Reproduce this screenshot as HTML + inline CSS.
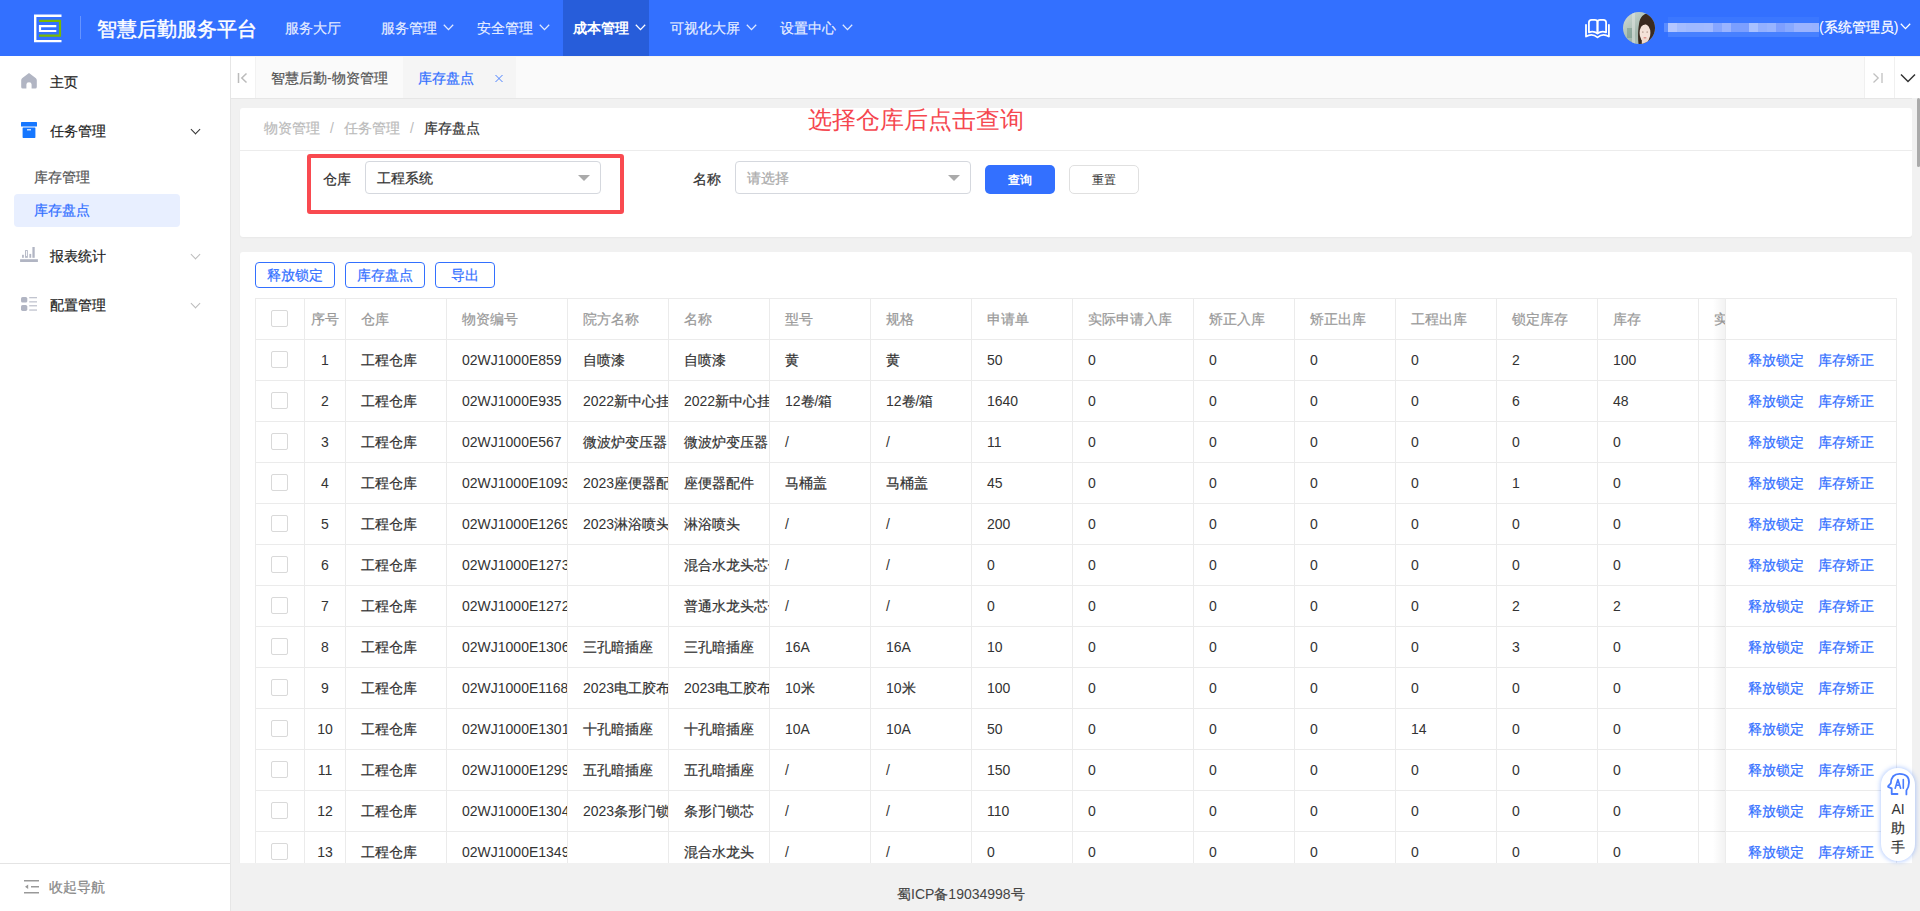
<!DOCTYPE html>
<html><head><meta charset="utf-8"><style>
*{margin:0;padding:0;box-sizing:border-box}
html,body{width:1920px;height:911px;overflow:hidden;background:#f1f1f1;font-family:"Liberation Sans",sans-serif;font-size:14px;color:#333}
.abs{position:absolute}
#hdr{position:absolute;left:0;top:0;width:1920px;height:56px;background:#3370ff}
#hdr .sep{position:absolute;left:80px;top:16px;width:1px;height:23px;background:rgba(255,255,255,.25)}
#hdr .title{position:absolute;left:97px;top:15px;font-size:20px;line-height:28px;color:#fff;font-weight:500;white-space:nowrap}
.nav{position:absolute;top:0;height:56px;line-height:56px;font-size:14px;color:rgba(255,255,255,.85);white-space:nowrap}
.nav.on{background:#275dda;color:#fff;font-weight:bold}
.chev{display:inline-block;width:11px;height:7px;vertical-align:top;margin-left:6px;margin-top:24px;background:no-repeat}
#side{position:absolute;left:0;top:56px;width:231px;height:855px;background:#fff;border-right:1px solid #e6e6e6}
.mi{position:absolute;left:50px;font-size:14px;line-height:20px;color:#1f1f1f;font-weight:500;white-space:nowrap}
.smi{position:absolute;left:34px;font-size:14px;line-height:20px;color:#555;white-space:nowrap}
.schev{position:absolute;left:192px;width:7px;height:7px;border-right:1.2px solid #999;border-bottom:1.2px solid #999;transform:rotate(45deg)}
#tabs{position:absolute;left:231px;top:56px;width:1689px;height:43px;background:#fafafa;border-top:1px solid #f6f4f0;border-bottom:1px solid #e6e6e6}
.card{position:absolute;background:#fff;border-radius:3px;box-shadow:0 1px 2px rgba(0,0,0,.04)}
.tbl .hl{position:absolute;left:255px;width:1641px;height:1px;background:#ebebeb}
.tbl .vl{position:absolute;top:298px;width:1px;height:574px;background:#ebebeb}
.th,.td{position:absolute;height:41px;line-height:43px;padding-left:15px;white-space:nowrap;overflow:hidden;font-size:14px}
.th{color:#999}
.td{color:#333}
.th.c,.td.c{padding-left:0;text-align:center}
.cb{position:absolute;width:17px;height:17px;border:1px solid #d9d9d9;border-radius:2px;background:#fff}
.fixcol{position:absolute;left:1725px;width:172px;background:#fff;border-left:1px solid #ececec;border-right:1px solid #ebebeb}
.fshadow{position:absolute;left:1713px;width:12px;background:linear-gradient(90deg,rgba(0,0,0,0),rgba(0,0,0,.05))}
.fhl{position:absolute;left:0;width:170px;height:1px;background:#ebebeb}
.act{position:absolute;left:0;width:170px;height:41px;line-height:42px;font-size:14px;color:#3370ff;white-space:nowrap;padding-left:22px}
.act span+span{margin-left:14px}
#clip{position:absolute;left:231px;top:98px;width:1689px;height:765px;overflow:hidden}
#wrap{position:absolute;left:0;top:0;width:1920px;height:863px;overflow:hidden}
.bc{font-size:14px;line-height:20px;white-space:nowrap}
.bc .sl{color:#bbb;margin:0 10px}
.lbl{font-size:14px;line-height:20px;color:#333;white-space:nowrap}
.sel{height:33px;border:1px solid #d5d8de;border-radius:4px;background:#fff;font-size:14px;line-height:33px;padding-left:11px;white-space:nowrap}
.tri{position:absolute;right:10px;top:13px;width:0;height:0;border-left:6px solid transparent;border-right:6px solid transparent;border-top:6px solid #aaa}
.btn-p{width:70px;height:29px;border-radius:5px;background:#3370ff;color:#fff;font-size:12px;line-height:31px;text-align:center;font-weight:bold}
.btn-d{width:70px;height:29px;border-radius:5px;border:1px solid #e0e0e0;background:#fff;color:#333;font-size:12px;line-height:29px;text-align:center}
.btn-o{height:26px;border-radius:4px;border:1px solid #3370ff;background:#fff;color:#3370ff;font-size:14px;line-height:24px;text-align:center}
.ai{background:#fff;border-radius:17px;box-shadow:0 0 4px 1px rgba(61,123,255,.35)}

b.z{font-weight:inherit;-webkit-text-stroke-width:.22px}
.ns b.z,.nav.on b.z,.btn-p b.z,.btn-d b.z{-webkit-text-stroke-width:0}

#hdr .title b.z{-webkit-text-stroke-width:.45px}

</style></head><body>
<div id="hdr">
  <svg class="abs" style="left:33px;top:14px" width="30" height="29" viewBox="0 0 30 29">
    <path d="M28.5 1.7H2.2V27.1H28.5" fill="none" stroke="#fff" stroke-width="2.4"/>
    <path d="M6 6.8H27V21.6H6" fill="none" stroke="#7ab800" stroke-width="2.2"/>
    <path d="M23.3 12.2H7V17H23.3" fill="none" stroke="#fff" stroke-width="2.2"/>
  </svg>
  <div class="sep"></div>
  <div class="title"><b class="z">智慧后勤服务平台</b></div>
  <div class="nav" style="left:285px"><b class="z">服务大厅</b></div>
  <div class="nav" style="left:381px"><b class="z">服务管理</b><svg class="chev" viewBox="0 0 11 7"><path d="M0.8 0.8L5.5 5.6L10.2 0.8" fill="none" stroke="currentColor" stroke-width="1.3"/></svg></div>
  <div class="nav" style="left:477px"><b class="z">安全管理</b><svg class="chev" viewBox="0 0 11 7"><path d="M0.8 0.8L5.5 5.6L10.2 0.8" fill="none" stroke="currentColor" stroke-width="1.3"/></svg></div>
  <div class="nav on" style="left:563px;padding-left:10px;width:86px"><b class="z">成本管理</b><svg class="chev" viewBox="0 0 11 7"><path d="M0.8 0.8L5.5 5.6L10.2 0.8" fill="none" stroke="currentColor" stroke-width="1.3"/></svg></div>
  <div class="nav" style="left:670px"><b class="z">可视化大屏</b><svg class="chev" viewBox="0 0 11 7"><path d="M0.8 0.8L5.5 5.6L10.2 0.8" fill="none" stroke="currentColor" stroke-width="1.3"/></svg></div>
  <div class="nav" style="left:780px"><b class="z">设置中心</b><svg class="chev" viewBox="0 0 11 7"><path d="M0.8 0.8L5.5 5.6L10.2 0.8" fill="none" stroke="currentColor" stroke-width="1.3"/></svg></div>
  <svg class="abs" style="left:1584px;top:18px" width="28" height="23" viewBox="0 0 28 23"><g fill="none" stroke="#fff" stroke-width="1.8" stroke-linejoin="round" stroke-linecap="round"><path d="M13.5 15.4V4.2Q13.5 1.9 10.8 1.9H7.6Q4.9 1.9 4.9 4.6V14.3Q9.6 12.6 13.5 15.4Z"/><path d="M13.5 15.4V4.2Q13.5 1.9 16.2 1.9H19.4Q22.1 1.9 22.1 4.6V14.3Q17.4 12.6 13.5 15.4Z"/><path d="M2 6.8V18.6Q8 14.8 13.5 19.4Q19 14.8 24.9 18.6V6.8"/></g></svg>
  <svg class="abs" style="left:1623px;top:12px" width="32" height="32" viewBox="0 0 32 32">
    <defs><clipPath id="av"><circle cx="16" cy="16" r="16"/></clipPath>
    <linearGradient id="avbg" x1="0" y1="0" x2="1" y2="1"><stop offset="0" stop-color="#d3dcd7"/><stop offset=".55" stop-color="#a3b8ae"/><stop offset="1" stop-color="#bfcbc4"/></linearGradient></defs>
    <g clip-path="url(#av)">
      <rect width="32" height="32" fill="url(#avbg)"/>
      <rect x="9" y="0" width="3" height="32" fill="#e3e8e4" opacity=".5"/>
      <rect x="4" y="16" width="5" height="10" fill="#6f9486" opacity=".5"/>
      <path d="M15.5 32C14.8 26 15 18 16 12C17 4 21.5 1 26 1.5C30.5 2.5 32.5 7 32.5 14V32Z" fill="#3a2a20"/>
      <ellipse cx="22" cy="21" rx="5.4" ry="8.8" fill="#f4e2d8"/>
      <path d="M17.5 14Q20 9.5 25 10.5Q23 12 17.5 14Z" fill="#3a2a20"/>
      <rect x="18.8" y="26" width="6.5" height="6" fill="#f0d9cd"/>
      <ellipse cx="19.8" cy="20" rx=".9" ry=".6" fill="#7a5a4c" opacity=".7"/><ellipse cx="24.2" cy="20" rx=".9" ry=".6" fill="#7a5a4c" opacity=".7"/>
      <ellipse cx="22" cy="25.8" rx="1.6" ry=".8" fill="#de8f88"/>
    </g>
  </svg>
  <div class="abs" style="left:1668px;top:17px;width:151px;height:6px;background:#3b77ff"></div>
  <div class="abs" style="left:1668px;top:32px;width:151px;height:5px;background:#4780ff"></div>
  <div class="abs" style="left:1664px;top:23px;width:4px;height:9px;background:#5a8cff"></div>
  <div class="abs" style="left:1668px;top:23px;width:151px;height:9px;background:linear-gradient(90deg,#b3c6ff 0px 9px,#a3bcff 9px 18px,#9fb9ff 18px 27px,#a0b9ff 27px 36px,#a2baff 36px 45px,#86a6ff 45px 54px,#9ab4ff 54px 63px,#7a9fff 63px 72px,#7c9fff 72px 81px,#a9c1ff 81px 90px,#93b0ff 90px 99px,#98b4ff 99px 108px,#7e9fff 108px 117px,#88a9ff 117px 126px,#9ab3ff 126px 135px,#9ab3ff 135px 144px,#98b2ff 144px 151px)"></div>
  <div class="abs" style="left:1819px;top:16px;font-size:14px;line-height:22px;color:#fff;white-space:nowrap">(<b class="z">系统管理员</b>)<svg class="chev" style="margin-left:2px;margin-top:7px" viewBox="0 0 11 7"><path d="M0.8 0.8L5.5 5.6L10.2 0.8" fill="none" stroke="currentColor" stroke-width="1.3"/></svg></div>
</div>

<div id="side">
  <svg class="abs" style="left:20px;top:16px" width="18" height="18" viewBox="0 0 18 18"><path d="M9 1.1L15.6 5.9Q16.8 6.8 16.8 8.2V15Q16.8 16.6 15.2 16.6H11.6V12.4Q11.6 10.2 9 10.2Q6.4 10.2 6.4 12.4V16.6H2.8Q1.2 16.6 1.2 15V8.2Q1.2 6.8 2.4 5.9Z" fill="#b1b5c3"/></svg>
  <div class="mi" style="top:16px"><b class="z">主页</b></div>
  <svg class="abs" style="left:20px;top:65px" width="18" height="18" viewBox="0 0 18 18"><rect x="1" y="1" width="16" height="4.6" rx=".6" fill="#1677ff"/><rect x="2.6" y="6.5" width="12.8" height="10.4" rx=".6" fill="#1677ff"/><rect x="7" y="8" width="4" height="1.5" fill="#fff" opacity=".75"/></svg>
  <div class="mi" style="top:65px"><b class="z">任务管理</b></div>
  <div class="schev" style="top:70px;border-color:#333"></div>
  <div class="smi" style="top:111px"><b class="z">库存管理</b></div>
  <div class="abs" style="left:14px;top:138px;width:166px;height:33px;border-radius:4px;background:#e8efff"></div>
  <div class="smi" style="top:144px;color:#3370ff"><b class="z">库存盘点</b></div>
  <svg class="abs" style="left:20px;top:191px" width="18" height="16" viewBox="0 0 18 16"><g fill="#b1b5c3"><rect x="0.1" y="12.2" width="17.8" height="2.8"/><rect x="2.1" y="7.8" width="1.7" height="3"/><rect x="5.55" y="3.55" width="1.8" height="6.8" fill="none" stroke="#b1b5c3" stroke-width=".9"/><rect x="9.4" y="6.9" width="1.8" height="3.9"/><rect x="12.4" y="0" width="2.3" height="10.8"/></g></svg>
  <div class="mi" style="top:190px"><b class="z">报表统计</b></div>
  <div class="schev" style="top:195px;border-color:#bbb"></div>
  <svg class="abs" style="left:21px;top:241px" width="17" height="15" viewBox="0 0 17 15"><g fill="#b1b5c3"><rect x="0" y="0" width="6.3" height="5.6" rx="1.6"/><rect x="0" y="8" width="6.3" height="5.9" rx="1.6"/><rect x="8.2" y="0" width="7.8" height="1.3" opacity=".8"/><rect x="8.2" y="4.2" width="7.8" height="1.3" opacity=".8"/><rect x="8.2" y="8.1" width="7.8" height="1.3" opacity=".8"/><rect x="8.2" y="12.4" width="7.8" height="1.3" opacity=".8"/></g></svg>
  <div class="mi" style="top:239px"><b class="z">配置管理</b></div>
  <div class="schev" style="top:244px;border-color:#bbb"></div>
  <div class="abs" style="left:0;top:807px;width:230px;height:1px;background:#e4e4e4"></div>
  <svg class="abs" style="left:24px;top:824px" width="16" height="14" viewBox="0 0 16 14"><g fill="#999"><rect x="0" y="0" width="15" height="1.5"/><rect x="7" y="6" width="8" height="1.5"/><rect x="0" y="12" width="15" height="1.5"/><path d="M1 6.75L4.2 4.6V8.9Z"/></g></svg>
  <div class="abs" style="left:49px;top:821px;font-size:14px;line-height:20px;color:#888;white-space:nowrap"><b class="z">收起导航</b></div>
</div>

<div id="tabs">
  <div class="abs" style="left:0;top:0;width:25px;height:41px;background:#fff;border-right:1px solid #f2f2f2"></div>
  <svg class="abs" style="left:6px;top:15px" width="11" height="12" viewBox="0 0 11 12"><path d="M1.5 1V11M9.5 1.5L4.8 6L9.5 10.5" fill="none" stroke="#bbb" stroke-width="1.5"/></svg>
  <div class="abs" style="left:40px;top:11px;font-size:14px;line-height:20px;color:#555;white-space:nowrap"><b class="z">智慧后勤</b>-<b class="z">物资管理</b></div>
  <div class="abs" style="left:172px;top:0;width:113px;height:41px;background:#f5f5f5"></div>
  <div class="abs" style="left:187px;top:11px;font-size:14px;line-height:20px;color:#3370ff;white-space:nowrap"><b class="z">库存盘点</b></div>
  <svg class="abs" style="left:264px;top:17px" width="8" height="9" viewBox="0 0 8 9"><path d="M0.5 1L7.5 8M7.5 1L0.5 8" stroke="#4d82ff" stroke-width="1"/></svg>
  <div class="abs" style="left:1633px;top:0;width:56px;height:41px;background:#fff"></div>
  <div class="abs" style="left:1633px;top:0;width:1px;height:41px;background:#f0f0f0"></div>
  <div class="abs" style="left:1663px;top:0;width:1px;height:41px;background:#f0f0f0"></div>
  <svg class="abs" style="left:1641px;top:15px" width="12" height="12" viewBox="0 0 12 12"><path d="M1.5 1.5L6.2 6L1.5 10.5M10 1V11" fill="none" stroke="#c0c0c0" stroke-width="1.3"/></svg>
  <svg class="abs" style="left:1669px;top:16px" width="16" height="10" viewBox="0 0 16 10"><path d="M1 1.5L8 8.5L15 1.5" fill="none" stroke="#333" stroke-width="1.5"/></svg>
</div>

<div id="wrap">
<div class="card" style="left:240px;top:108px;width:1672px;height:129px"></div>
<div class="abs" style="left:240px;top:150px;width:1672px;height:1px;background:#ececec"></div>
<div class="abs bc" style="left:264px;top:118px"><span style="color:#bbb"><b class="z">物资管理</b></span><span class="sl">/</span><span style="color:#bbb"><b class="z">任务管理</b></span><span class="sl">/</span><span style="color:#333"><b class="z">库存盘点</b></span></div>
<div class="abs ns" style="left:808px;top:104px;font-size:24px;line-height:32px;color:#f5474f;white-space:nowrap"><b class="z">选择仓库后点击查询</b></div>
<div class="abs" style="left:307px;top:154px;width:317px;height:60px;border:4px solid #f94a50;border-radius:3px"></div>
<div class="abs lbl" style="left:323px;top:169px"><b class="z">仓库</b></div>
<div class="abs sel" style="left:365px;top:161px;width:236px"><span style="color:#333"><b class="z">工程系统</b></span><i class="tri"></i></div>
<div class="abs lbl" style="left:693px;top:169px"><b class="z">名称</b></div>
<div class="abs sel" style="left:735px;top:161px;width:236px"><span style="color:#aaa"><b class="z">请选择</b></span><i class="tri"></i></div>
<div class="abs btn-p" style="left:985px;top:165px"><b class="z">查询</b></div>
<div class="abs btn-d" style="left:1069px;top:165px"><b class="z">重置</b></div>

<div class="card" style="left:240px;top:252px;width:1672px;height:640px"></div>
<div class="abs btn-o" style="left:255px;top:262px;width:80px"><b class="z">释放锁定</b></div>
<div class="abs btn-o" style="left:345px;top:262px;width:80px"><b class="z">库存盘点</b></div>
<div class="abs btn-o" style="left:435px;top:262px;width:60px"><b class="z">导出</b></div>
<div class="tbl">
<div class="hl" style="top:298px"></div>
<div class="hl" style="top:339px"></div>
<div class="hl" style="top:380px"></div>
<div class="hl" style="top:421px"></div>
<div class="hl" style="top:462px"></div>
<div class="hl" style="top:503px"></div>
<div class="hl" style="top:544px"></div>
<div class="hl" style="top:585px"></div>
<div class="hl" style="top:626px"></div>
<div class="hl" style="top:667px"></div>
<div class="hl" style="top:708px"></div>
<div class="hl" style="top:749px"></div>
<div class="hl" style="top:790px"></div>
<div class="hl" style="top:831px"></div>
<div class="hl" style="top:872px"></div>
<div class="vl" style="left:255px"></div>
<div class="vl" style="left:304px"></div>
<div class="vl" style="left:345px"></div>
<div class="vl" style="left:446px"></div>
<div class="vl" style="left:567px"></div>
<div class="vl" style="left:668px"></div>
<div class="vl" style="left:769px"></div>
<div class="vl" style="left:870px"></div>
<div class="vl" style="left:971px"></div>
<div class="vl" style="left:1072px"></div>
<div class="vl" style="left:1193px"></div>
<div class="vl" style="left:1294px"></div>
<div class="vl" style="left:1395px"></div>
<div class="vl" style="left:1496px"></div>
<div class="vl" style="left:1597px"></div>
<div class="vl" style="left:1698px"></div>
<div class="cb" style="left:271px;top:310px"></div>
<div class="th c" style="left:305px;top:298px;width:40px"><b class="z">序号</b></div>
<div class="th" style="left:346px;top:298px;width:100px"><b class="z">仓库</b></div>
<div class="th" style="left:447px;top:298px;width:120px"><b class="z">物资编号</b></div>
<div class="th" style="left:568px;top:298px;width:100px"><b class="z">院方名称</b></div>
<div class="th" style="left:669px;top:298px;width:100px"><b class="z">名称</b></div>
<div class="th" style="left:770px;top:298px;width:100px"><b class="z">型号</b></div>
<div class="th" style="left:871px;top:298px;width:100px"><b class="z">规格</b></div>
<div class="th" style="left:972px;top:298px;width:100px"><b class="z">申请单</b></div>
<div class="th" style="left:1073px;top:298px;width:120px"><b class="z">实际申请入库</b></div>
<div class="th" style="left:1194px;top:298px;width:100px"><b class="z">矫正入库</b></div>
<div class="th" style="left:1295px;top:298px;width:100px"><b class="z">矫正出库</b></div>
<div class="th" style="left:1396px;top:298px;width:100px"><b class="z">工程出库</b></div>
<div class="th" style="left:1497px;top:298px;width:100px"><b class="z">锁定库存</b></div>
<div class="th" style="left:1598px;top:298px;width:100px"><b class="z">库存</b></div>
<div class="th" style="left:1699px;top:298px;width:121px"><b class="z">实际库存</b></div>
<div class="cb" style="left:271px;top:351px"></div>
<div class="td c" style="left:305px;top:339px;width:40px">1</div>
<div class="td" style="left:346px;top:339px;width:100px"><b class="z">工程仓库</b></div>
<div class="td" style="left:447px;top:339px;width:120px">02WJ1000E859</div>
<div class="td" style="left:568px;top:339px;width:100px"><b class="z">自喷漆</b></div>
<div class="td" style="left:669px;top:339px;width:100px"><b class="z">自喷漆</b></div>
<div class="td" style="left:770px;top:339px;width:100px"><b class="z">黄</b></div>
<div class="td" style="left:871px;top:339px;width:100px"><b class="z">黄</b></div>
<div class="td" style="left:972px;top:339px;width:100px">50</div>
<div class="td" style="left:1073px;top:339px;width:120px">0</div>
<div class="td" style="left:1194px;top:339px;width:100px">0</div>
<div class="td" style="left:1295px;top:339px;width:100px">0</div>
<div class="td" style="left:1396px;top:339px;width:100px">0</div>
<div class="td" style="left:1497px;top:339px;width:100px">2</div>
<div class="td" style="left:1598px;top:339px;width:100px">100</div>
<div class="cb" style="left:271px;top:392px"></div>
<div class="td c" style="left:305px;top:380px;width:40px">2</div>
<div class="td" style="left:346px;top:380px;width:100px"><b class="z">工程仓库</b></div>
<div class="td" style="left:447px;top:380px;width:120px">02WJ1000E935</div>
<div class="td" style="left:568px;top:380px;width:100px">2022<b class="z">新中心挂号</b></div>
<div class="td" style="left:669px;top:380px;width:100px">2022<b class="z">新中心挂号</b></div>
<div class="td" style="left:770px;top:380px;width:100px">12<b class="z">卷</b>/<b class="z">箱</b></div>
<div class="td" style="left:871px;top:380px;width:100px">12<b class="z">卷</b>/<b class="z">箱</b></div>
<div class="td" style="left:972px;top:380px;width:100px">1640</div>
<div class="td" style="left:1073px;top:380px;width:120px">0</div>
<div class="td" style="left:1194px;top:380px;width:100px">0</div>
<div class="td" style="left:1295px;top:380px;width:100px">0</div>
<div class="td" style="left:1396px;top:380px;width:100px">0</div>
<div class="td" style="left:1497px;top:380px;width:100px">6</div>
<div class="td" style="left:1598px;top:380px;width:100px">48</div>
<div class="cb" style="left:271px;top:433px"></div>
<div class="td c" style="left:305px;top:421px;width:40px">3</div>
<div class="td" style="left:346px;top:421px;width:100px"><b class="z">工程仓库</b></div>
<div class="td" style="left:447px;top:421px;width:120px">02WJ1000E567</div>
<div class="td" style="left:568px;top:421px;width:100px"><b class="z">微波炉变压器</b></div>
<div class="td" style="left:669px;top:421px;width:100px"><b class="z">微波炉变压器</b></div>
<div class="td" style="left:770px;top:421px;width:100px">/</div>
<div class="td" style="left:871px;top:421px;width:100px">/</div>
<div class="td" style="left:972px;top:421px;width:100px">11</div>
<div class="td" style="left:1073px;top:421px;width:120px">0</div>
<div class="td" style="left:1194px;top:421px;width:100px">0</div>
<div class="td" style="left:1295px;top:421px;width:100px">0</div>
<div class="td" style="left:1396px;top:421px;width:100px">0</div>
<div class="td" style="left:1497px;top:421px;width:100px">0</div>
<div class="td" style="left:1598px;top:421px;width:100px">0</div>
<div class="cb" style="left:271px;top:474px"></div>
<div class="td c" style="left:305px;top:462px;width:40px">4</div>
<div class="td" style="left:346px;top:462px;width:100px"><b class="z">工程仓库</b></div>
<div class="td" style="left:447px;top:462px;width:120px">02WJ1000E1093</div>
<div class="td" style="left:568px;top:462px;width:100px">2023<b class="z">座便器配件</b></div>
<div class="td" style="left:669px;top:462px;width:100px"><b class="z">座便器配件</b></div>
<div class="td" style="left:770px;top:462px;width:100px"><b class="z">马桶盖</b></div>
<div class="td" style="left:871px;top:462px;width:100px"><b class="z">马桶盖</b></div>
<div class="td" style="left:972px;top:462px;width:100px">45</div>
<div class="td" style="left:1073px;top:462px;width:120px">0</div>
<div class="td" style="left:1194px;top:462px;width:100px">0</div>
<div class="td" style="left:1295px;top:462px;width:100px">0</div>
<div class="td" style="left:1396px;top:462px;width:100px">0</div>
<div class="td" style="left:1497px;top:462px;width:100px">1</div>
<div class="td" style="left:1598px;top:462px;width:100px">0</div>
<div class="cb" style="left:271px;top:515px"></div>
<div class="td c" style="left:305px;top:503px;width:40px">5</div>
<div class="td" style="left:346px;top:503px;width:100px"><b class="z">工程仓库</b></div>
<div class="td" style="left:447px;top:503px;width:120px">02WJ1000E1269</div>
<div class="td" style="left:568px;top:503px;width:100px">2023<b class="z">淋浴喷头</b></div>
<div class="td" style="left:669px;top:503px;width:100px"><b class="z">淋浴喷头</b></div>
<div class="td" style="left:770px;top:503px;width:100px">/</div>
<div class="td" style="left:871px;top:503px;width:100px">/</div>
<div class="td" style="left:972px;top:503px;width:100px">200</div>
<div class="td" style="left:1073px;top:503px;width:120px">0</div>
<div class="td" style="left:1194px;top:503px;width:100px">0</div>
<div class="td" style="left:1295px;top:503px;width:100px">0</div>
<div class="td" style="left:1396px;top:503px;width:100px">0</div>
<div class="td" style="left:1497px;top:503px;width:100px">0</div>
<div class="td" style="left:1598px;top:503px;width:100px">0</div>
<div class="cb" style="left:271px;top:556px"></div>
<div class="td c" style="left:305px;top:544px;width:40px">6</div>
<div class="td" style="left:346px;top:544px;width:100px"><b class="z">工程仓库</b></div>
<div class="td" style="left:447px;top:544px;width:120px">02WJ1000E1273</div>
<div class="td" style="left:568px;top:544px;width:100px"></div>
<div class="td" style="left:669px;top:544px;width:100px"><b class="z">混合水龙头芯子</b></div>
<div class="td" style="left:770px;top:544px;width:100px">/</div>
<div class="td" style="left:871px;top:544px;width:100px">/</div>
<div class="td" style="left:972px;top:544px;width:100px">0</div>
<div class="td" style="left:1073px;top:544px;width:120px">0</div>
<div class="td" style="left:1194px;top:544px;width:100px">0</div>
<div class="td" style="left:1295px;top:544px;width:100px">0</div>
<div class="td" style="left:1396px;top:544px;width:100px">0</div>
<div class="td" style="left:1497px;top:544px;width:100px">0</div>
<div class="td" style="left:1598px;top:544px;width:100px">0</div>
<div class="cb" style="left:271px;top:597px"></div>
<div class="td c" style="left:305px;top:585px;width:40px">7</div>
<div class="td" style="left:346px;top:585px;width:100px"><b class="z">工程仓库</b></div>
<div class="td" style="left:447px;top:585px;width:120px">02WJ1000E1272</div>
<div class="td" style="left:568px;top:585px;width:100px"></div>
<div class="td" style="left:669px;top:585px;width:100px"><b class="z">普通水龙头芯子</b></div>
<div class="td" style="left:770px;top:585px;width:100px">/</div>
<div class="td" style="left:871px;top:585px;width:100px">/</div>
<div class="td" style="left:972px;top:585px;width:100px">0</div>
<div class="td" style="left:1073px;top:585px;width:120px">0</div>
<div class="td" style="left:1194px;top:585px;width:100px">0</div>
<div class="td" style="left:1295px;top:585px;width:100px">0</div>
<div class="td" style="left:1396px;top:585px;width:100px">0</div>
<div class="td" style="left:1497px;top:585px;width:100px">2</div>
<div class="td" style="left:1598px;top:585px;width:100px">2</div>
<div class="cb" style="left:271px;top:638px"></div>
<div class="td c" style="left:305px;top:626px;width:40px">8</div>
<div class="td" style="left:346px;top:626px;width:100px"><b class="z">工程仓库</b></div>
<div class="td" style="left:447px;top:626px;width:120px">02WJ1000E1306</div>
<div class="td" style="left:568px;top:626px;width:100px"><b class="z">三孔暗插座</b></div>
<div class="td" style="left:669px;top:626px;width:100px"><b class="z">三孔暗插座</b></div>
<div class="td" style="left:770px;top:626px;width:100px">16A</div>
<div class="td" style="left:871px;top:626px;width:100px">16A</div>
<div class="td" style="left:972px;top:626px;width:100px">10</div>
<div class="td" style="left:1073px;top:626px;width:120px">0</div>
<div class="td" style="left:1194px;top:626px;width:100px">0</div>
<div class="td" style="left:1295px;top:626px;width:100px">0</div>
<div class="td" style="left:1396px;top:626px;width:100px">0</div>
<div class="td" style="left:1497px;top:626px;width:100px">3</div>
<div class="td" style="left:1598px;top:626px;width:100px">0</div>
<div class="cb" style="left:271px;top:679px"></div>
<div class="td c" style="left:305px;top:667px;width:40px">9</div>
<div class="td" style="left:346px;top:667px;width:100px"><b class="z">工程仓库</b></div>
<div class="td" style="left:447px;top:667px;width:120px">02WJ1000E1168</div>
<div class="td" style="left:568px;top:667px;width:100px">2023<b class="z">电工胶布</b></div>
<div class="td" style="left:669px;top:667px;width:100px">2023<b class="z">电工胶布</b></div>
<div class="td" style="left:770px;top:667px;width:100px">10<b class="z">米</b></div>
<div class="td" style="left:871px;top:667px;width:100px">10<b class="z">米</b></div>
<div class="td" style="left:972px;top:667px;width:100px">100</div>
<div class="td" style="left:1073px;top:667px;width:120px">0</div>
<div class="td" style="left:1194px;top:667px;width:100px">0</div>
<div class="td" style="left:1295px;top:667px;width:100px">0</div>
<div class="td" style="left:1396px;top:667px;width:100px">0</div>
<div class="td" style="left:1497px;top:667px;width:100px">0</div>
<div class="td" style="left:1598px;top:667px;width:100px">0</div>
<div class="cb" style="left:271px;top:720px"></div>
<div class="td c" style="left:305px;top:708px;width:40px">10</div>
<div class="td" style="left:346px;top:708px;width:100px"><b class="z">工程仓库</b></div>
<div class="td" style="left:447px;top:708px;width:120px">02WJ1000E1301</div>
<div class="td" style="left:568px;top:708px;width:100px"><b class="z">十孔暗插座</b></div>
<div class="td" style="left:669px;top:708px;width:100px"><b class="z">十孔暗插座</b></div>
<div class="td" style="left:770px;top:708px;width:100px">10A</div>
<div class="td" style="left:871px;top:708px;width:100px">10A</div>
<div class="td" style="left:972px;top:708px;width:100px">50</div>
<div class="td" style="left:1073px;top:708px;width:120px">0</div>
<div class="td" style="left:1194px;top:708px;width:100px">0</div>
<div class="td" style="left:1295px;top:708px;width:100px">0</div>
<div class="td" style="left:1396px;top:708px;width:100px">14</div>
<div class="td" style="left:1497px;top:708px;width:100px">0</div>
<div class="td" style="left:1598px;top:708px;width:100px">0</div>
<div class="cb" style="left:271px;top:761px"></div>
<div class="td c" style="left:305px;top:749px;width:40px">11</div>
<div class="td" style="left:346px;top:749px;width:100px"><b class="z">工程仓库</b></div>
<div class="td" style="left:447px;top:749px;width:120px">02WJ1000E1299</div>
<div class="td" style="left:568px;top:749px;width:100px"><b class="z">五孔暗插座</b></div>
<div class="td" style="left:669px;top:749px;width:100px"><b class="z">五孔暗插座</b></div>
<div class="td" style="left:770px;top:749px;width:100px">/</div>
<div class="td" style="left:871px;top:749px;width:100px">/</div>
<div class="td" style="left:972px;top:749px;width:100px">150</div>
<div class="td" style="left:1073px;top:749px;width:120px">0</div>
<div class="td" style="left:1194px;top:749px;width:100px">0</div>
<div class="td" style="left:1295px;top:749px;width:100px">0</div>
<div class="td" style="left:1396px;top:749px;width:100px">0</div>
<div class="td" style="left:1497px;top:749px;width:100px">0</div>
<div class="td" style="left:1598px;top:749px;width:100px">0</div>
<div class="cb" style="left:271px;top:802px"></div>
<div class="td c" style="left:305px;top:790px;width:40px">12</div>
<div class="td" style="left:346px;top:790px;width:100px"><b class="z">工程仓库</b></div>
<div class="td" style="left:447px;top:790px;width:120px">02WJ1000E1304</div>
<div class="td" style="left:568px;top:790px;width:100px">2023<b class="z">条形门锁芯</b></div>
<div class="td" style="left:669px;top:790px;width:100px"><b class="z">条形门锁芯</b></div>
<div class="td" style="left:770px;top:790px;width:100px">/</div>
<div class="td" style="left:871px;top:790px;width:100px">/</div>
<div class="td" style="left:972px;top:790px;width:100px">110</div>
<div class="td" style="left:1073px;top:790px;width:120px">0</div>
<div class="td" style="left:1194px;top:790px;width:100px">0</div>
<div class="td" style="left:1295px;top:790px;width:100px">0</div>
<div class="td" style="left:1396px;top:790px;width:100px">0</div>
<div class="td" style="left:1497px;top:790px;width:100px">0</div>
<div class="td" style="left:1598px;top:790px;width:100px">0</div>
<div class="cb" style="left:271px;top:843px"></div>
<div class="td c" style="left:305px;top:831px;width:40px">13</div>
<div class="td" style="left:346px;top:831px;width:100px"><b class="z">工程仓库</b></div>
<div class="td" style="left:447px;top:831px;width:120px">02WJ1000E1349</div>
<div class="td" style="left:568px;top:831px;width:100px"></div>
<div class="td" style="left:669px;top:831px;width:100px"><b class="z">混合水龙头</b></div>
<div class="td" style="left:770px;top:831px;width:100px">/</div>
<div class="td" style="left:871px;top:831px;width:100px">/</div>
<div class="td" style="left:972px;top:831px;width:100px">0</div>
<div class="td" style="left:1073px;top:831px;width:120px">0</div>
<div class="td" style="left:1194px;top:831px;width:100px">0</div>
<div class="td" style="left:1295px;top:831px;width:100px">0</div>
<div class="td" style="left:1396px;top:831px;width:100px">0</div>
<div class="td" style="left:1497px;top:831px;width:100px">0</div>
<div class="td" style="left:1598px;top:831px;width:100px">0</div>
<div class="fshadow" style="top:299px;height:574px"></div>
<div class="fixcol" style="top:298px;height:575px">
<div class="fhl" style="top:0px"></div>
<div class="fhl" style="top:41px"></div>
<div class="fhl" style="top:82px"></div>
<div class="fhl" style="top:123px"></div>
<div class="fhl" style="top:164px"></div>
<div class="fhl" style="top:205px"></div>
<div class="fhl" style="top:246px"></div>
<div class="fhl" style="top:287px"></div>
<div class="fhl" style="top:328px"></div>
<div class="fhl" style="top:369px"></div>
<div class="fhl" style="top:410px"></div>
<div class="fhl" style="top:451px"></div>
<div class="fhl" style="top:492px"></div>
<div class="fhl" style="top:533px"></div>
<div class="fhl" style="top:574px"></div>
<div class="act" style="top:41px"><span><b class="z">释放锁定</b></span><span><b class="z">库存矫正</b></span></div>
<div class="act" style="top:82px"><span><b class="z">释放锁定</b></span><span><b class="z">库存矫正</b></span></div>
<div class="act" style="top:123px"><span><b class="z">释放锁定</b></span><span><b class="z">库存矫正</b></span></div>
<div class="act" style="top:164px"><span><b class="z">释放锁定</b></span><span><b class="z">库存矫正</b></span></div>
<div class="act" style="top:205px"><span><b class="z">释放锁定</b></span><span><b class="z">库存矫正</b></span></div>
<div class="act" style="top:246px"><span><b class="z">释放锁定</b></span><span><b class="z">库存矫正</b></span></div>
<div class="act" style="top:287px"><span><b class="z">释放锁定</b></span><span><b class="z">库存矫正</b></span></div>
<div class="act" style="top:328px"><span><b class="z">释放锁定</b></span><span><b class="z">库存矫正</b></span></div>
<div class="act" style="top:369px"><span><b class="z">释放锁定</b></span><span><b class="z">库存矫正</b></span></div>
<div class="act" style="top:410px"><span><b class="z">释放锁定</b></span><span><b class="z">库存矫正</b></span></div>
<div class="act" style="top:451px"><span><b class="z">释放锁定</b></span><span><b class="z">库存矫正</b></span></div>
<div class="act" style="top:492px"><span><b class="z">释放锁定</b></span><span><b class="z">库存矫正</b></span></div>
<div class="act" style="top:533px"><span><b class="z">释放锁定</b></span><span><b class="z">库存矫正</b></span></div>
</div>
</div>
</div>
<div class="abs" style="left:231px;top:863px;width:1689px;height:48px;background:#f1f1f1"></div>
<div class="abs" style="left:897px;top:884px;font-size:14px;line-height:20px;color:#444;white-space:nowrap"><b class="z">蜀</b>ICP<b class="z">备</b>19034998<b class="z">号</b></div>
<div class="abs" style="left:1912px;top:98px;width:8px;height:765px;background:#f1f1f1"></div>
<div class="abs" style="left:1917px;top:98px;width:3px;height:69px;border-radius:1.5px;background:#aaa"></div>

<div class="abs ai" style="left:1881px;top:768px;width:34px;height:93px">
  <svg class="abs" style="left:3px;top:2px" width="28" height="28" viewBox="0 0 28 28"><g fill="none" stroke="#4a7dff" stroke-width="1.8" stroke-linejoin="round" stroke-linecap="round"><path d="M13.5 24H7.7V18.4L4.6 17.2Q3.7 16.6 4.4 15.8L6.8 13.3Q7.3 3.8 15.5 3.8Q25.3 4 25 12.5Q24.8 17.5 22.4 20.5V24.4"/><path d="M11.2 18.3L13.9 9.6L16.6 18.3M12.2 15.3H15.6M19.3 9.5V18.3" stroke-width="1.6"/></g></svg>
  <div class="abs" style="left:0;top:32px;width:34px;text-align:center;font-size:14px;line-height:19px;color:#333">AI<br><b class="z">助</b><br><b class="z">手</b></div>
</div>

</body></html>
